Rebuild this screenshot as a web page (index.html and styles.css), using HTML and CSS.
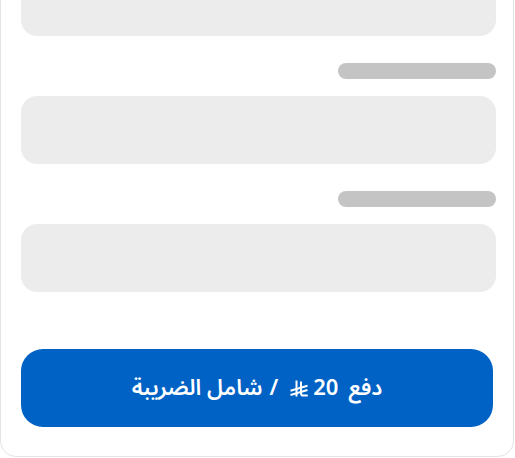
FILE: index.html
```html
<!DOCTYPE html>
<html lang="ar" dir="rtl">
<head>
  <meta charset="UTF-8" />
  <title>الدفع</title>
  <link rel="stylesheet" href="styles.css">
</head>
<body>
  <div class="page">
    <div class="card">
      <div class="field">
        <div class="skeleton-label"></div>
        <div class="skeleton-input"></div>
      </div>
      <div class="field">
        <div class="skeleton-label"></div>
        <div class="skeleton-input"></div>
      </div>
      <div class="field">
        <div class="skeleton-label"></div>
        <div class="skeleton-input"></div>
      </div>

      <button class="pay-button">
        <span>دفع</span>
        <span class="amount">20</span>
        <svg class="riyal" viewBox="0 0 18 17" aria-label="ريال">
          <path d="M6.5 0.5 V16.5" />
          <path d="M11 1.5 V13.2 Q11 15.6 13.4 15.6 H17.8" />
          <path d="M0.5 15 L17.5 10" />
          <path d="M0.5 10.8 L17.5 5.8" />
        </svg>
        <span class="slash">/</span>
        <span>شامل الضريبة</span>
      </button>
    </div>
  </div>
</body>
</html>
```

FILE: styles.css
```css
html, body {
  margin: 0;
  height: 100%;
  background-color: #ffffff;
}

body {
  font-family: "Noto Sans Arabic", "DejaVu Sans", sans-serif;
  overflow: hidden;
}

.page {
  height: 458px;
  display: flex;
  flex-direction: column;
  justify-content: flex-end;
  overflow: hidden;
  padding: 0 1px 1px 0;
  box-sizing: border-box;
}

.card {
  flex-shrink: 0;
  background-color: #ffffff;
  border: 1px solid #e4e4e4;
  border-radius: 16px;
  padding: 24px 17px 29px 20px;
  display: flex;
  flex-direction: column;
  gap: 27px;
}

.field {
  display: flex;
  flex-direction: column;
  gap: 17px;
}

.skeleton-label {
  width: 158px;
  height: 16px;
  border-radius: 8px;
  background-color: #c4c4c4;
}

.skeleton-input {
  height: 68px;
  border-radius: 16px;
  background-color: #ececec;
}

.pay-button {
  margin-top: 30px;
  margin-right: 3px;
  height: 78px;
  border: none;
  border-radius: 22px;
  background-color: #0062c4;
  color: #ffffff;
  font-family: inherit;
  font-size: 22px;
  font-weight: 600;
  display: flex;
  align-items: center;
  justify-content: center;
  gap: 7px;
  cursor: pointer;
}

.amount {
  margin-right: 3px;
  margin-left: -2px;
}

.slash {
  margin-right: 5px;
}

.riyal {
  width: 18px;
  height: 17px;
  fill: none;
  stroke: #ffffff;
  stroke-width: 2;
  stroke-linecap: butt;
}
```
